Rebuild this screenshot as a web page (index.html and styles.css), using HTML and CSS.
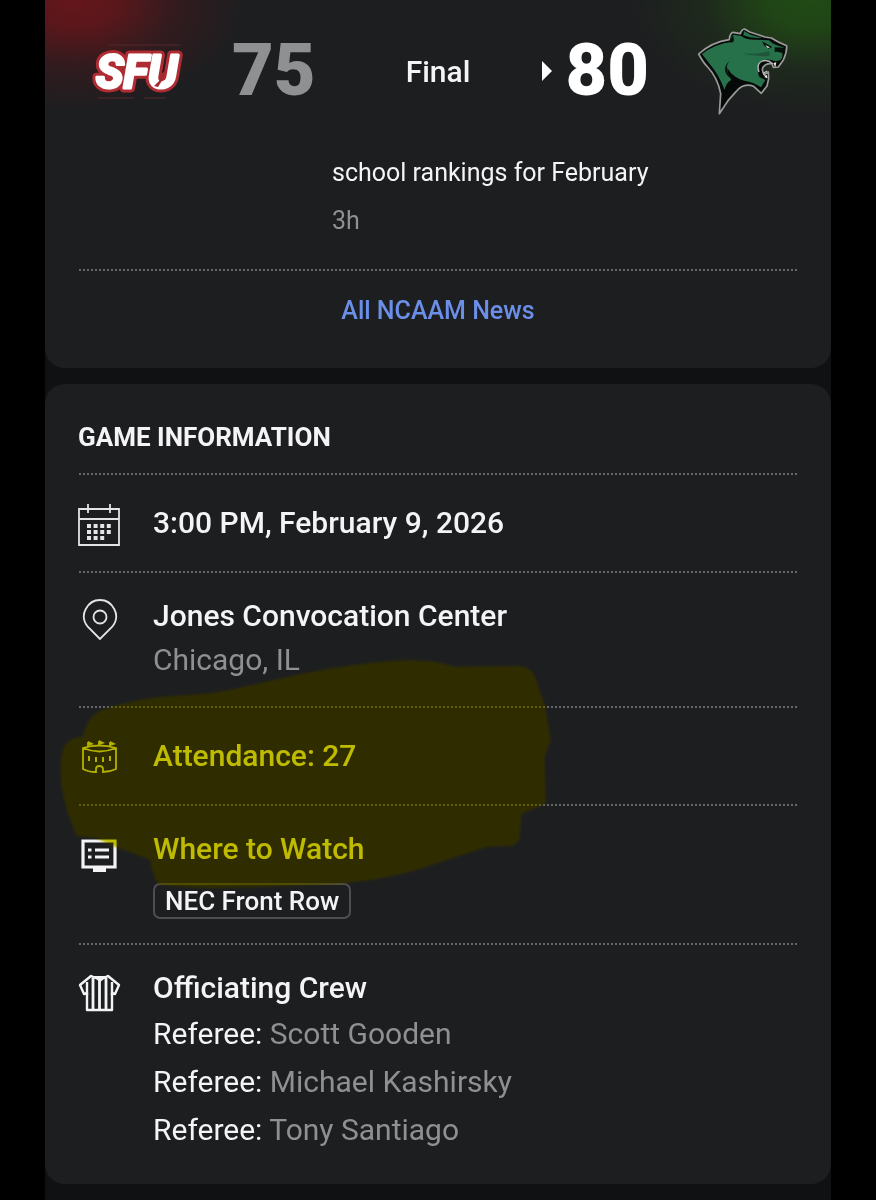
FILE: index.html
```
<!DOCTYPE html>
<html lang="en">

<head>
    <meta charset="UTF-8">
    <meta name="viewport" content="width=device-width, initial-scale=1.0">
    <title>SFU 75 - 80 Final</title>
    <link rel="stylesheet" href="styles.css">
</head>

<body>
    <div class="app">
        <!-- Scoreboard -->
        <header class="scoreboard">
            <div class="team">
                <svg class="sfu-logo" viewBox="-6 0 96 58" role="img" aria-label="SFU">
                    <path d="M14 3 H86 M4 56 H40 M50 56 H72" stroke="#54282b" stroke-width="1" />
                    <text class="sfu-text sfu-outer" x="2" y="46">SFU</text>
                    <text class="sfu-text sfu-inner" x="2" y="46">SFU</text>
                    <path d="M60 44 l6-6 -1-4 7-6 -3 9 -5 8z" fill="#a52a31" />
                </svg>
                <span class="score">75</span>
            </div>
            <div class="status">Final</div>
            <div class="team team-home">
                <svg class="winner" viewBox="0 0 10 20"><path d="M0 0 L10 10 L0 20z" fill="#fff" /></svg>
                <span class="score score-win">80</span>
                <svg class="panther" viewBox="20 22 273 264">
                    <path d="M25 103 Q65 67 117 60 Q118 42 128 38 L150 42 Q154 29 163 28 L178 37 L224 52 L243 55 Q263 68 289 78 Q290 98 279 121 L264 142 L249 143 L245 132 Q224 130 217 145 Q214 158 223 164 L234 157 L235 177 L230 199 L213 221 L190 200 Q159 188 137 216 L113 243 L87 282 L91 222 Q82 174 52 142 Q38 128 25 103z" fill="#050a08" stroke="#9a9a9a" stroke-width="5" stroke-linejoin="round" />
                    <path d="M35 103 Q73 73 122 67 Q119 49 130 45 L153 49 Q164 61 200 60 L236 62 Q250 77 280 83 L276 99 Q278 116 270 122 L255 125 Q231 114 213 124 Q196 145 207 172 L225 181 L212 203 Q190 187 162 183 Q128 175 111 145 Q110 163 123 181 Q107 189 103 211 Q83 160 58 133z" fill="#27714a" />
                    <path d="M161 34 L181 45 L215 54 Q183 57 159 47z" fill="#27714a" />
                    <path d="M118 124 Q105 137 112 158 Q119 176 140 184 Q112 176 105 157 Q101 136 118 124z" fill="#08150e" />
                    <path d="M150 101 Q195 106 237 95 L237 109 Q195 112 150 101z" fill="#1d5638" />
                    <path d="M215 65 L246 82 L235 87 L222 78z M253 83 L284 84 L276 101 Q266 95 253 97z M116 66 Q137 76 128 46z" fill="#07110c" />
                    <path d="M225 76 L239 83 L232 86z" fill="#d6d8d4" />
                    <path d="M206 157 Q197 132 216 124 Q233 119 247 132 M218 161 L231 154 M219 163 L231 174" fill="none" stroke="#b9b7b7" stroke-width="4" />
                    <path d="M249 130 l9-2 -3 15z M222 172 l8-7 0 11z" fill="#ebe8e5" />
                </svg>
            </div>
        </header>

        <!-- News -->
        <section class="card news-card">
            <div class="news-item">
                <div class="news-text">school rankings for February</div>
                <div class="news-time">3h</div>
            </div>
            <div class="news-more">
                <a href="#">All NCAAM News</a>
            </div>
        </section>

        <!-- Game information -->
        <section class="card info-card">
            <h2>GAME INFORMATION</h2>

            <div class="row row-single">
                <div class="icon">
                    <svg width="44" height="44" viewBox="0 0 44 44" fill="none" stroke="#e4e4e5" stroke-width="1.8">
                        <path d="M1 6 H41 V42 H1z M1 16 H41 M10 1 V10 M32 1 V10" />
                        <path d="M9 23 H34 M9 29 H34 M9 35 H28" stroke-width="4" stroke-dasharray="4 2.6" />
                    </svg>
                </div>
                <div class="title">3:00 PM, February 9, 2026</div>
            </div>

            <div class="row">
                <div class="icon">
                    <svg width="44" height="44" viewBox="0 0 44 44" fill="none" stroke="#e4e4e5" stroke-width="1.8">
                        <path d="M22 43 L10 31 C0 19 10 4 22 4 S44 19 34 31z" />
                        <circle cx="22" cy="21" r="6.5" />
                    </svg>
                </div>
                <div>
                    <div class="title">Jones Convocation Center</div>
                    <div class="sub">Chicago, IL</div>
                </div>
            </div>

            <div class="row row-single">
                <div class="icon">
                    <svg width="44" height="44" viewBox="0 0 44 44" fill="none" stroke="#e4e4e5" stroke-width="1.8">
                        <path d="M5 12 Q21 7 38 12 V33 Q32 36 25 36 V33 Q25 30 21 30 Q18 30 18 33 V36 Q10 36 5 33z M5 12 Q21 19 38 12" />
                        <path d="M10 11 V6 M21 10 V5 M32 11 V6" />
                        <path d="M10 5 l6 3 -6 2z M21 4 l6 3 -6 2z M32 5 l6 3 -6 2z" fill="#e4e4e5" stroke="none" />
                        <path d="M11 20 V25 M18 21 V26 M25 21 V26 M32 20 V25" stroke-width="2" />
                    </svg>
                </div>
                <div class="title">Attendance: 27</div>
            </div>

            <div class="row">
                <div class="icon">
                    <svg width="44" height="44" viewBox="0 0 44 44" fill="none" stroke="#f4f4f6">
                        <path d="M5 12 H37 V38 H5z" stroke-width="3.2" />
                        <path d="M15 41 H28" stroke-width="4" />
                        <path d="M10 21 H13.500 M10 28 H13.500 M17 21 H31 M17 28 H31" stroke-width="3" />
                    </svg>
                </div>
                <div>
                    <div class="title">Where to Watch</div>
                    <div class="chip">NEC Front Row</div>
                </div>
            </div>

            <div class="row row-crew">
                <div class="icon">
                    <svg width="44" height="44" viewBox="0 0 44 44" fill="none" stroke="#f4f4f6" stroke-width="2.4">
                        <path d="M13 8 L2 17 L6 26 L9 25 V42 H34 V25 L37 26 L41 17 L30 8 Q22 13 13 8z" stroke-linejoin="round" />
                        <path d="M9 14 V27 M34 14 V27" />
                        <path d="M15 10 V42 M21.500 11 V42 M28 10 V42" stroke-width="2.8" />
                        <path d="M14 8 H30 L22 14z" fill="#f4f4f6" stroke="none" />
                    </svg>
                </div>
                <div>
                    <div class="title">Officiating Crew</div>
                    <ul class="crew">
                        <li>Referee: <span>Scott Gooden</span></li>
                        <li>Referee: <span>Michael Kashirsky</span></li>
                        <li>Referee: <span>Tony Santiago</span></li>
                    </ul>
                </div>
            </div>

            <!-- Marker stroke: one layer tints the text, the other lifts the background -->
            <svg class="marker marker-tint" viewBox="0 0 1568 900" preserveAspectRatio="none">
                <path id="stroke" d="M112 290 Q125 225 175 208 Q240 185 330 172 L490 160 Q570 145 700 115 Q850 80 970 68 Q1090 53 1170 68 L1215 80 L1400 78 Q1435 78 1450 110 L1480 200 L1496 300 L1478 350 L1482 490 L1410 522 L1404 600 L1385 617 L1310 620 Q1200 655 1115 685 Q1000 722 850 733 L620 742 L490 745 Q400 742 335 733 Q315 700 312 660 Q265 640 210 622 L150 594 L95 588 Q70 540 55 470 Q36 390 55 320 Q75 290 112 290z" />
            </svg>
            <svg class="marker marker-lift" viewBox="0 0 1568 900" preserveAspectRatio="none">
                <use href="#stroke" />
            </svg>
        </section>
    </div>
</body>

</html>
```
FILE: styles.css
```
* {
    box-sizing: border-box;
}

body {
    margin: 0;
    padding: 0 45px;
    background-color: #000;
    color: #f4f4f6;
    font-family: Roboto, "Liberation Sans", sans-serif;
}

.app {
    background-color: #101113;
    padding-bottom: 16px;
}

/* Scoreboard */
.scoreboard {
    display: grid;
    grid-template-columns: 1fr auto 1fr;
    align-items: center;
    padding: 27px 43px 42px;
    background-color: #1d1e20;
    background-image:
        radial-gradient(ellipse 170px 110px at 30px 0, #65161b 0%, #5a171b 25%, rgba(70, 24, 28, 0.5) 60%, rgba(29, 30, 32, 0) 100%),
        radial-gradient(ellipse 180px 115px at calc(100% - 20px) 0, #204a16 0%, #204416 25%, rgba(31, 52, 25, 0.5) 60%, rgba(29, 30, 32, 0) 100%);
}

.team {
    display: flex;
    align-items: center;
    gap: 48px;
}

.team-home {
    justify-content: flex-end;
}

.sfu-logo {
    width: 96px;
    height: 58px;
}

.sfu-text {
    font-family: Roboto, "Liberation Sans", sans-serif;
    font-size: 46px;
    font-weight: 700;
    font-style: italic;
    stroke-linejoin: round;
}

.sfu-outer {
    fill: #b02c33;
    stroke: #b02c33;
    stroke-width: 9px;
}

.sfu-inner {
    fill: #fff;
    stroke: #fff;
    stroke-width: 3px;
}

.score {
    color: #8f9092;
    font-size: 72px;
    font-weight: 900;
    line-height: 88px;
}

.score-win {
    color: #fff;
    margin-left: -34px;
}

.status {
    font-size: 30px;
    font-weight: 500;
}

.winner {
    width: 10px;
    height: 20px;
}

.panther {
    width: 91px;
    height: 88px;
}

/* Cards */
.card {
    background-color: #1d1e20;
    border-radius: 20px;
    padding: 0 33px;
}

.news-card {
    border-radius: 0 0 20px 20px;
    margin-bottom: 16px;
}

.news-item {
    padding: 0 0 32px 254px;
    font-size: 25px;
    line-height: 32px;
}

.news-time {
    margin-top: 16px;
    color: #8f9092;
}

.news-more,
.row {
    background-image: radial-gradient(circle, #66676a 1px, transparent 1px);
    background-size: 4px 2px;
    background-repeat: repeat-x;
}

.news-more {
    padding: 26px 0 41px;
    text-align: center;
    font-size: 25px;
    line-height: 32px;
}

.news-more a {
    color: #6b8fe8;
    font-weight: 500;
    text-decoration: none;
}

/* Game information */
.info-card {
    position: relative;
    padding-top: 30px;
}

h2 {
    margin: 0;
    padding-bottom: 13px;
    font-size: 26px;
    font-weight: 700;
    line-height: 46px;
}

.row {
    display: flex;
    gap: 31px;
    padding: 23px 0 24px;
}

.row-single {
    padding: 28px 0 26px;
}

.row-crew {
    padding-bottom: 30px;
}

.icon {
    flex: none;
    height: 44px;
    padding-top: 2px;
}

.title {
    font-size: 30px;
    font-weight: 500;
    line-height: 44px;
}

.sub {
    color: #8f9092;
    font-size: 30px;
    line-height: 44px;
}

.chip {
    display: inline-block;
    vertical-align: top;
    margin-top: 12px;
    padding: 0 10px;
    border: 2px solid #4d4e51;
    border-radius: 7px;
    font-size: 26px;
    font-weight: 500;
    line-height: 32px;
}

.crew {
    list-style: none;
    margin: 0;
    padding: 0;
    font-size: 30px;
    line-height: 48px;
}

.crew span {
    color: #8f9092;
}

/* Marker */
.marker {
    position: absolute;
    left: 0;
    top: 256px;
    width: 530px;
    height: 300px;
    pointer-events: none;
    filter: blur(1px);
}

.marker-tint {
    fill: #c0bc00;
    mix-blend-mode: multiply;
}

.marker-lift {
    fill: #1b1800;
    mix-blend-mode: screen;
}
```
